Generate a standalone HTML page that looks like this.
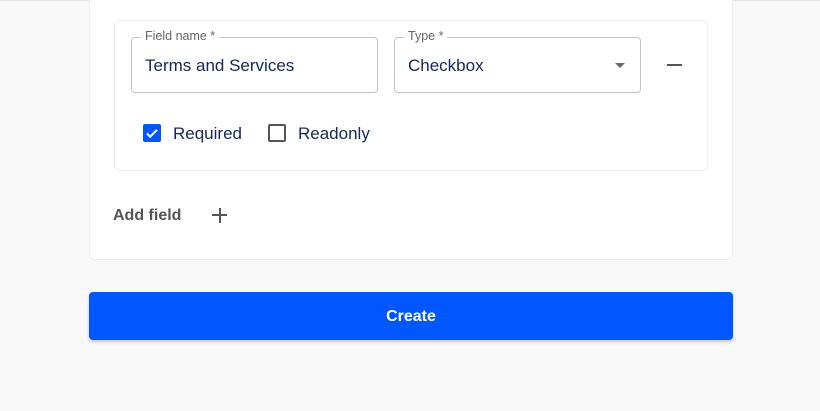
<!DOCTYPE html><html><head><style>
*{box-sizing:border-box;margin:0;padding:0}
body{width:820px;height:411px;background:#f8f8f8;font-family:"Liberation Sans",sans-serif;position:relative;overflow:hidden}
.card{position:absolute;left:89px;top:-10px;width:644px;height:270px;background:#fff;border:1px solid #eee;border-radius:6px}
.inner{position:absolute;left:114px;top:20px;width:594px;height:151px;border:1px solid #eee;border-radius:5px;background:#fff}
.f{position:absolute;top:37px;height:56px;border:1px solid #c4c4c4;border-radius:4px;font-size:17px;color:#14295a;padding:18px 13px}
.lab{position:absolute;top:-9px;left:9px;background:#fff;padding:0 4px;font-size:12.5px;color:#666}
.cb{position:absolute;top:124px;width:18px;height:18px;border-radius:2px}
.t{position:absolute;top:124px;font-size:17px;color:#14295a}
.btn{position:absolute;left:89px;top:292px;width:644px;height:48px;background:#0057ff;border-radius:4px;color:#fff;font-weight:bold;font-size:16px;text-align:center;line-height:50px;box-shadow:0 2px 3px rgba(0,0,0,.2)}
</style></head><body>
<div style="position:absolute;left:0;top:0;width:820px;height:1px;background:#e4e4e4"></div>
<div class="card"></div>
<div class="inner"></div>
<div class="f" style="left:131px;width:247px"><span class="lab">Field name *</span>Terms and Services</div>
<div class="f" style="left:394px;width:247px"><span class="lab">Type *</span>Checkbox
<div style="position:absolute;right:15px;top:25px;width:0;height:0;border-left:5px solid transparent;border-right:5px solid transparent;border-top:5px solid #666"></div></div>
<div style="position:absolute;left:667px;top:64px;width:15px;height:2px;background:#555"></div>
<div class="cb" style="left:143px;background:#0057ff"><svg width="18" height="18" viewBox="0 0 18 18"><path d="M4 9.5l3.2 3.2L14 5.8" stroke="#fff" stroke-width="2" fill="none"/></svg></div>
<div class="t" style="left:173px">Required</div>
<div class="cb" style="left:268px;border:2px solid #555"></div>
<div class="t" style="left:298px">Readonly</div>
<div style="position:absolute;left:113px;top:207px;font-size:16px;font-weight:bold;color:#555">Add field</div>
<div style="position:absolute;left:212px;top:214px;width:15px;height:2px;background:#555"></div>
<div style="position:absolute;left:218.5px;top:207.5px;width:2px;height:15px;background:#555"></div>
<div class="btn">Create</div>
</body></html>
